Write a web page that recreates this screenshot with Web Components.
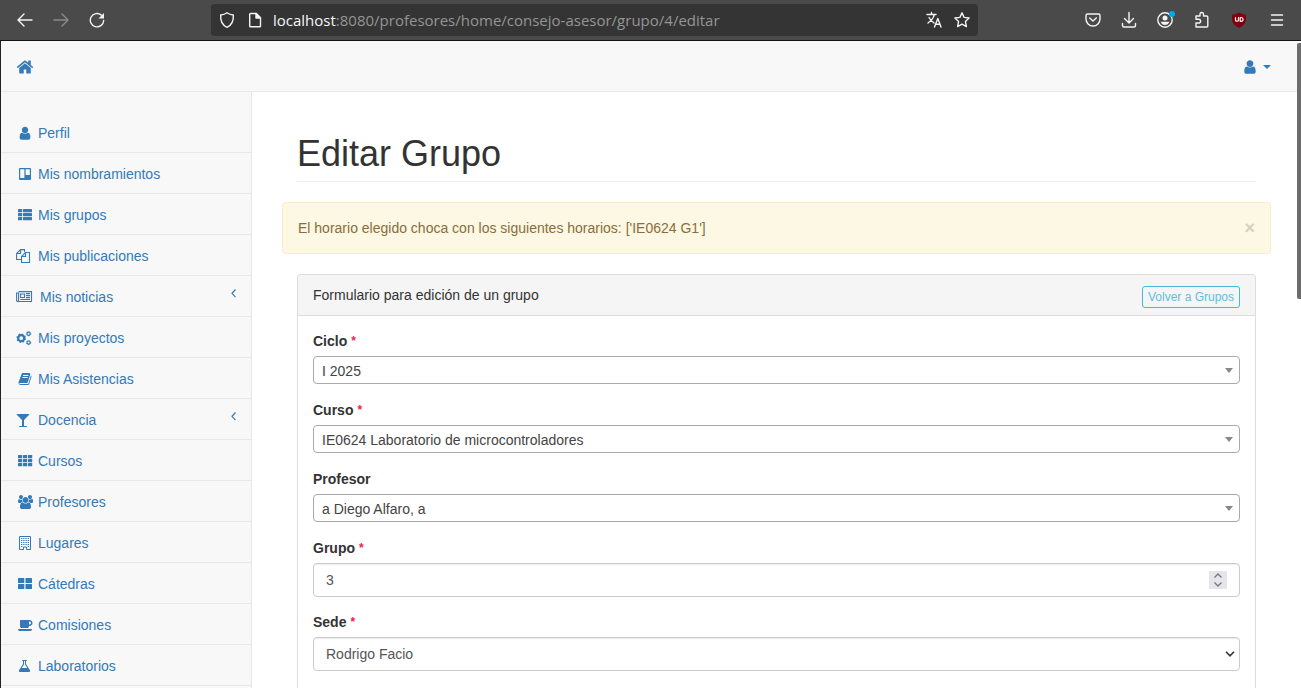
<!DOCTYPE html>
<html lang="es">
<head>
<meta charset="utf-8">
<title>Editar Grupo</title>
<style>
html, body { margin: 0; height: 100%; }
body { font: 14px/20px "Liberation Sans", Arial, sans-serif; color: #333; background: #fff; overflow: hidden; }
</style>
</head>
<body>
<app-window>
  <browser-bar slot="bar" host="localhost" path=":8080/profesores/home/consejo-asesor/grupo/4/editar"></browser-bar>
  <top-nav slot="top"></top-nav>
  <side-menu slot="side">
    <menu-item icon="user">Perfil</menu-item>
    <menu-item icon="trello">Mis nombramientos</menu-item>
    <menu-item icon="thlist">Mis grupos</menu-item>
    <menu-item icon="files">Mis publicaciones</menu-item>
    <menu-item icon="news" wide expandable>Mis noticias</menu-item>
    <menu-item icon="cogs">Mis proyectos</menu-item>
    <menu-item icon="book">Mis Asistencias</menu-item>
    <menu-item icon="glass" expandable>Docencia</menu-item>
    <menu-item icon="th">Cursos</menu-item>
    <menu-item icon="users">Profesores</menu-item>
    <menu-item icon="building">Lugares</menu-item>
    <menu-item icon="thlarge">Cátedras</menu-item>
    <menu-item icon="coffee">Comisiones</menu-item>
    <menu-item icon="flask">Laboratorios</menu-item>
  </side-menu>
  <page-title>Editar Grupo</page-title>
  <alert-box>El horario elegido choca con los siguientes horarios: ['IE0624 G1']</alert-box>
  <form-panel heading="Formulario para edición de un grupo" action="Volver a Grupos">
    <form-field kind="search" label="Ciclo" value="I 2025" required></form-field>
    <form-field kind="search" label="Curso" value="IE0624 Laboratorio de microcontroladores" required></form-field>
    <form-field kind="search" label="Profesor" value="a Diego Alfaro, a"></form-field>
    <form-field kind="number" label="Grupo" value="3" required></form-field>
    <form-field kind="select" label="Sede" value="Rodrigo Facio" required></form-field>
  </form-panel>
</app-window>

<script>
const base = `:host,*{box-sizing:border-box} button{font:inherit;color:inherit;background:none;border:0;padding:0;cursor:pointer} svg{display:block;flex:none}`;

function define(name, render) {
  customElements.define(name, class extends HTMLElement {
    connectedCallback() {
      if (this.shadowRoot) return;
      this.attachShadow({ mode: 'open' }).innerHTML = render(this);
    }
  });
}

const paths = {
  home: 'M1472 992v480q0 26-19 45t-45 19h-384v-384h-256v384h-384q-26 0-45-19t-19-45v-480q0-1 .5-3t.5-3l575-474 575 474q1 2 1 6zm223-69l-62 74q-8 9-21 11h-3q-13 0-21-7l-692-577-692 577q-12 8-24 7-13-2-21-11l-62-74q-8-10-7-23.5t11-21.5l719-599q32-26 76-26t76 26l244 204v-195q0-14 9-23t23-9h192q14 0 23 9t9 23v408l219 182q10 8 11 21.5t-7 23.5z',
  user: 'M1536 1399q0 109-62.5 187t-150.5 78h-854q-88 0-150.5-78t-62.5-187q0-85 8.5-160.5t31.5-152 58.5-131 94-89 134.5-34.5q131 128 313 128t313-128q76 0 134.5 34.5t94 89 58.5 131 31.5 152 8.5 160.5zm-256-887q0 159-112.5 271.5t-271.5 112.5-271.5-112.5-112.5-271.5 112.5-271.5 271.5-112.5 271.5 112.5 112.5 271.5z',
  users: 'M593 896q-162 5-265 128h-134q-82 0-138-40.5t-56-118.5q0-353 124-353 6 0 43.5 21t97.5 42.5 119 21.5q67 0 133-23-5 37-5 66 0 159 93 293zm1071 637q0 120-73 189.5t-194 69.5h-874q-121 0-194-69.5t-73-189.5q0-53 3.5-103.5t14-109 26.5-108.5 43-97.5 62-81 85.5-53.5 111.5-20q10 0 43 21.5t73 48 107 48 135 21.5 135-21.5 107-48 73-48 43-21.5q61 0 111.5 20t85.5 53.5 62 81 43 97.5 26.5 108.5 14 109 3.5 103.5zm-1024-1277q0 106-75 181t-181 75-181-75-75-181 75-181 181-75 181 75 75 181zm704 384q0 159-112.5 271.5t-271.5 112.5-271.5-112.5-112.5-271.5 112.5-271.5 271.5-112.5 271.5 112.5 112.5 271.5zm576 225q0 78-56 118.5t-138 40.5h-134q-103-123-265-128 93-134 93-293 0-29-5-66 66 23 133 23 59 0 119-21.5t97.5-42.5 43.5-21q124 0 124 353zm-128-609q0 106-75 181t-181 75-181-75-75-181 75-181 181-75 181 75 75 181z',
  coffee: 'M1664 640q0-80-56-136t-136-56h-64v384h64q80 0 136-56t56-136zm-1664 768h1792q0 106-75 181t-181 75h-1280q-106 0-181-75t-75-181zm1856-768q0 159-112.5 271.5t-271.5 112.5h-64v32q0 92-66 158t-158 66h-704q-92 0-158-66t-66-158v-736q0-26 19-45t45-19h1152q159 0 271.5 112.5t112.5 271.5z',
  glass: 'M1699 186q0 35-43 78l-632 632v768h320q26 0 45 19t19 45-19 45-45 19h-896q-26 0-45-19t-19-45 19-45 45-19h320v-768l-632-632q-43-43-43-78 0-23 18-36.5t38-17.5 43-4h1408q23 0 43 4t38 17.5 18 36.5z',
  flask: 'M1527 1448q56 89 21.5 152.5t-140.5 63.5h-1152q-106 0-140.5-63.5t21.5-152.5l503-793v-399h-64q-26 0-45-19t-19-45 19-45 45-19h512q26 0 45 19t19 45-19 45-45 19h-64v399zm-779-725l-272 429h712l-272-429-20-31v-436h-128v436z',
  book: 'M1703 478q40 57 18 129l-275 906q-19 64-76.5 107.5t-122.5 43.5h-923q-77 0-148.5-53.5t-99.5-131.5q-24-67-2-127 0-4 3-27t4-37q1-8-3-21.5t-3-19.5q2-11 8-21t16.5-23.5 16.5-23.5q23-38 45-91.5t30-91.5q3-10 .5-30t-.5-28q3-11 17-28t17-23q21-36 42-92t25-90q1-9-2.5-32t.5-28q4-13 22-30.5t22-22.5q19-26 42.5-84.5t27.5-96.5q1-8-3-25.5t-2-26.5q2-8 9-18t18-23 17-21q8-12 16.5-30.5t15-35 16-36 19.5-32 26.5-23.5 36-11.5 47.5 5.5l-1 3q38-9 51-9h761q74 0 114 56t18 130l-274 906q-36 119-71.5 153.5t-128.5 34.5h-869q-27 0-38 15-11 16-1 43 24 70 144 70h923q29 0 56-15.5t35-41.5l300-987q7-22 5-57 38 15 59 43zm-1064 2q-4 13 2 22.5t20 9.5h608q13 0 25.5-9.5t16.5-22.5l21-64q4-13-2-22.5t-20-9.5h-608q-13 0-25.5 9.5t-16.5 22.5zm-83 256q-4 13 2 22.5t20 9.5h608q13 0 25.5-9.5t16.5-22.5l21-64q4-13-2-22.5t-20-9.5h-608q-13 0-25.5 9.5t-16.5 22.5z'
};
const glyph = (name, x, y, s = 14) => `<path transform="translate(${x} ${y}) scale(${s / 1792})" d="${paths[name]}"/>`;
const cells = (xs, ys) => ys.map(([y, h]) => xs.map(([x, w]) => `<rect x="${x}" y="${y}" width="${w}" height="${h}" rx=".6"/>`).join('')).join('');
const gear = (x, y, r, n) => {
  const d = 2 * Math.PI * r * 1.35 / (2 * n);
  return `<g fill="none" stroke="currentColor"><circle cx="${x}" cy="${y}" r="${r}" stroke-width="${r * .75}"/><circle cx="${x}" cy="${y}" r="${r * 1.35}" stroke-width="${r * .5}" stroke-dasharray="${d}"/></g>`;
};

const icons = {
  user: glyph('user', 1.5, .7, 15),
  trello: '<path fill-rule="evenodd" d="M4 2h10a1 1 0 0 1 1 1v10a1 1 0 0 1-1 1H4a1 1 0 0 1-1-1V3a1 1 0 0 1 1-1zm.2 1.300v8.700h4.200V3.300zm5.400 0v5.700h4.200V3.300z"/>',
  thlist: cells([[2, 4.2], [7, 9]], [[2, 3.3], [6, 3.3], [10, 3.3]]),
  files: '<g fill="none" stroke="currentColor" stroke-width="1.1"><path d="M5 11.500H.6V5.500L4.600 1.600H8.500V4M4.600 1.600V5.500H.6"/><path d="M5.500 8.500L9.500 4.500H13.500V14.500H5.500zM9.500 4.500V8.500H5.500"/></g>',
  news: '<g fill="none" stroke="currentColor" stroke-width="1.1"><path d="M2.600 2.600H15.500V12.500H1.600Q.6 12.500.6 11.500V4H2.600V11.500Q2.600 12.500 1.600 12.500"/><path d="M4.600 5H8.500V8.500H4.600zM10 4.600H14M10 6.600H14M10 8.600H14M4.400 10.500H14"/></g>',
  cogs: gear(5.2, 8.2, 3, 8) + gear(12.6, 3.7, 1.6, 6) + gear(12.6, 12.6, 1.6, 6),
  book: glyph('book', 2, 1),
  glass: glyph('glass', 0, 1),
  th: cells([[2, 4.2], [7, 4.2], [12, 4.2]], [[2, 3.3], [6, 3.3], [10, 3.3]]),
  users: glyph('users', 2, 1),
  building: '<path fill="none" stroke="currentColor" d="M3.500 1.500h11v13h-4v-2.500h-3v2.500h-4z"/><path d="M5 3h1.300v1H5zm2.200 0h1.300v1H7.200zm2.300 0h1.300v1H9.500zm2.200 0H13v1h-1.300zM5 5h1.300v1H5zm2.200 0h1.300v1H7.200zm2.300 0h1.300v1H9.500zm2.200 0H13v1h-1.300zM5 7h1.300v1H5zm2.200 0h1.300v1H7.200zm2.300 0h1.300v1H9.500zm2.200 0H13v1h-1.300zM5 9h1.300v1H5zm2.200 0h1.300v1H7.200zm2.300 0h1.300v1H9.500zm2.200 0H13v1h-1.300zM5 11h1.300v1H5zm6.700 0H13v1h-1.300z"/>',
  thlarge: cells([[2, 6.3], [9.500, 6.500]], [[2, 5], [8, 5]]),
  coffee: glyph('coffee', 2, 1),
  flask: glyph('flask', 2, 1)
};

define('app-window', () => `<style>${base}
:host{display:flex;flex-direction:column;height:100vh;position:relative}
.page{flex:1;min-height:0;display:flex;flex-direction:column;border-left:1px solid #222;overflow:hidden}
.cols{flex:1;min-height:0;display:flex}
main{flex:1;min-width:0;padding:0 30px;border-left:1px solid #e7e7e7;display:flex;flex-direction:column}
.thumb{position:absolute;top:43px;right:0;width:4px;height:256px;background:#6c6c6c;border-radius:2px 0 0 2px}
</style><slot name="bar"></slot><div class="page"><slot name="top"></slot><div class="cols"><slot name="side"></slot><main><slot></slot></main></div></div><div class="thumb"></div>`);

define('browser-bar', el => {
  const b = (label, w, body, cls = '') => `<button type="button" class="${cls}" aria-label="${label}"><svg width="${w}" height="18" viewBox="0 0 ${w} 18" fill="none" stroke="currentColor" stroke-width="1.4" stroke-linecap="round" stroke-linejoin="round">${body}</svg></button>`;
  return `<style>${base}
:host{display:flex;align-items:center;flex:none;height:41px;padding:0 14px 1px 17px;background:#4a4a4a;box-shadow:inset 0 -1px #141414;color:#f4f4f4}
.group{display:flex;gap:20px;flex:none}
.off{color:#8b8b8b}
.url{flex:1;min-width:0;display:flex;align-items:center;height:32px;margin:0 107px 0 106px;padding:0 8px;gap:12px;border-radius:4px;background:#343434}
.address{flex:1;min-width:0;white-space:nowrap;overflow:hidden;font:15px/20px "Open Sans","Noto Sans",sans-serif;color:#949494}
.address b{font-weight:400;color:#f6f6f6}
.url .info{margin-right:-2px}
</style>
<nav class="group">${b('Atrás', 16, '<path d="M15 9H1M7 3L1 9l6 6"/>')}${b('Adelante', 16, '<path d="M1 9h14M9 3l6 6-6 6"/>', 'off')}${b('Recargar', 16, '<path d="M14.700 9.500a6.700 6.700 0 1 1-2.300-5.400"/><path fill="currentColor" stroke="none" d="M15 2v5.500H9.500z"/>')}</nav>
<div class="url">
${b('Protección', 16, '<path d="M8 1.700c2 1.500 4 2 6.300 2.300C14.800 10 12.500 14.200 8 16.300 3.500 14.200 1.200 10 1.700 4 4 3.700 6 3.200 8 1.700z"/>')}
${b('Información', 16, '<path d="M3.500 2.500h5.800L13.500 6.700v8.300q0 .8-.8.800H3.500q-.8 0-.8-.8V3.300q0-.8.800-.8z"/><path fill="currentColor" d="M9 2.500v4.500h4.500z"/>', 'info')}
<div class="address" role="textbox" aria-label="Dirección"><b>${el.getAttribute('host')}</b>${el.getAttribute('path')}</div>
${b('Traducir', 16, '<path d="M1 3.500h9M5.500 1.500v2M8.300 3.500Q7.500 8 2 12M3 6.500q2 3.500 5 5.500M8.500 16l3.300-8.500L15 16M9.600 13.300h4.300"/>')}
${b('Marcador', 16, '<path d="M8 1.800l2.100 4.600 5 .6-3.700 3.400 1 5.200L8 13.100l-4.400 2.500 1-5.200L.9 7l5-.6z"/>')}
</div>
<div class="group">
${b('Pocket', 16, '<path d="M2.500 3h11q1.500 0 1.500 1.500V8A7 7 0 0 1 1 8V4.500Q1 3 2.500 3z"/><path d="M4.700 7L8 10l3.300-3"/>')}
${b('Descargas', 16, '<path d="M8 1.500v10M3.500 7.500L8 12l4.500-4.500M1.500 12.500v2q0 1.500 1.500 1.500h10q1.500 0 1.500-1.500v-2"/>')}
${b('Cuenta', 18, '<circle cx="8" cy="9" r="7.200"/><circle cx="8" cy="7" r="2.500" fill="currentColor" stroke="none"/><path fill="currentColor" stroke="none" d="M3.700 10.800h8.600Q11 14 8 14t-4.300-3.200z"/><circle cx="15" cy="3" r="3" fill="#00a8f0" stroke="none"/>')}
${b('Extensiones', 16, '<path d="M1 16V12h2.300a1.900 1.900 0 1 0 0-3.700H1V5h4V3.300a1.700 1.700 0 0 1 3.500 0V5h3.200q1.100 0 1.100 1.100V15q0 1-1 1z"/>')}
${b('uBlock', 16, '<path fill="#800010" stroke="none" d="M8 1.500q3 2 7 2.200V8q0 5.500-7 9Q1 13.500 1 8V3.700q4-.2 7-2.200z"/><path stroke-width="1.200" d="M4.500 6.500v2.700q0 1 1.500 1t1.500-1V6.500M9.200 6.500h.8q2 0 2 1.900t-2 1.900h-.8z"/>')}
${b('Menú', 20, '<path d="M4.500 4h11M4.500 9h11M4.500 14h11"/>')}
</div>`;
});

define('top-nav', () => `<style>${base}
:host{display:flex;flex:none;align-items:center;justify-content:space-between;height:51px;padding:2px 30px 0 15px;background:#f8f8f8;border-bottom:1px solid #e7e7e7;color:#337ab7}
a{color:inherit}
button{display:flex;align-items:center;gap:6px}
</style><a href="#inicio" aria-label="Inicio"><svg width="18" height="18" viewBox="0 0 18 18" fill="currentColor">${glyph('home', 0, 0, 18)}</svg></a>
<button type="button" aria-label="Usuario"><svg width="14" height="14" viewBox="0 0 14 14" fill="currentColor"><g transform="translate(-1 -1) scale(1.140)">${glyph('user', 0, 0)}</g></svg><svg width="8" height="4" viewBox="0 0 8 4" fill="currentColor"><path d="M0 0h8L4 4z"/></svg></button>`);

define('side-menu', () => `<style>${base}
:host{display:block;flex:none;width:250px;padding-top:20px;background:#f8f8f8}
</style><nav><slot></slot></nav>`);

define('menu-item', el => `<style>${base}
:host{display:block;border-bottom:1px solid #e7e7e7}
a{display:flex;align-items:center;gap:4px;padding:11px 15px 9px;color:#337ab7;text-decoration:none}
:host([wide]) a{gap:6px}
span{flex:1}
.angle{align-self:flex-start}
</style><a href="#"><svg width="18" height="16" viewBox="0 0 18 16" fill="currentColor">${icons[el.getAttribute('icon')]}</svg><span><slot></slot></span>${el.hasAttribute('expandable') ? '<svg class="angle" width="5" height="14" viewBox="0 0 5 14" fill="none" stroke="currentColor" stroke-width="1.200"><path d="M4.500 2.500L1 6.300l3.500 3.800"/></svg>' : ''}</a>`);

define('page-title', () => `<style>${base}
:host{display:block;flex:none;margin:42px 15px 20px;padding-bottom:7px;border-bottom:1px solid #eee}
h1{margin:0;font-size:36px;line-height:40px;font-weight:400}
</style><h1><slot></slot></h1>`);

define('alert-box', () => `<style>${base}
:host{display:flex;flex:none;justify-content:space-between;align-items:center;margin-bottom:20px;padding:15px;border:1px solid #faebcc;border-radius:4px;background:#fcf8e3;color:#8a6d3b}
button{font-size:18px;line-height:20px;font-weight:700;color:#d6d1bc}
</style><span><slot></slot></span><button type="button" aria-label="Cerrar">×</button>`);

define('form-panel', el => `<style>${base}
:host{display:flex;flex-direction:column;flex:1 0 auto;margin:0 15px;border:1px solid #ddd;border-bottom:0;border-radius:4px 4px 0 0}
header{display:flex;justify-content:space-between;align-items:flex-start;height:41px;padding:10px 15px 7px;background:#f5f5f5;border-bottom:1px solid #ddd;border-radius:3px 3px 0 0}
button{align-self:flex-end;height:22px;padding:0 5px;border:1px solid #46b8da;border-radius:3px;font-size:12px;line-height:20px;color:#5bc0de}
form{padding:15px}
</style><header><span>${el.getAttribute('heading')}</span><button type="button">${el.getAttribute('action')}</button></header><form><slot></slot></form>`);

define('form-field', el => {
  const kind = el.getAttribute('kind'), value = el.getAttribute('value');
  const mark = {
    search: '<svg class="mark" width="8" height="5" viewBox="0 0 8 5"><path fill="#888" d="M0 0h8L4 5z"/></svg>',
    select: '<svg class="mark" width="10" height="6" viewBox="0 0 10 6"><path fill="none" stroke="#333" stroke-width="1.600" d="M1 .8l4 4 4-4"/></svg>',
    number: '<svg class="mark" width="18" height="18" viewBox="0 0 18 18"><path fill="#e6e5ec" d="M0 0h18v18H0z"/><path fill="none" stroke="#77767e" stroke-width="1.300" d="M5.500 6.500L9 3l3.500 3.500M5.500 11.500L9 15l3.500-3.500"/></svg>'
  }[kind];
  const control = kind === 'number'
    ? `<input id="c" type="number" value="${value}">`
    : `<select id="c"><option>${value}</option></select>`;
  return `<style>${base}
:host{display:block;margin-bottom:15px}
:host([kind=search]){margin-bottom:16px}
label{display:flex;gap:4px;margin-bottom:5px;font-weight:700}
i{font-size:12px;font-style:normal;color:#ee1c4e}
.box{display:grid;align-items:center}
.box>*{grid-area:1/1}
select,input{appearance:none;width:100%;height:34px;margin:0;padding:0 12px;font:inherit;color:#555;background:#fff;border:1px solid #ccc;border-radius:4px;outline:0;box-shadow:inset 0 1px 1px rgba(0,0,0,.08)}
input{appearance:textfield}
input::-webkit-inner-spin-button{display:none}
.search select{height:28px;padding:2px 8px 0;color:#444;border-color:#aaa;box-shadow:none}
.mark{justify-self:end;pointer-events:none;margin-right:5px}
.search .mark{margin-right:7px}
.number .mark{margin-right:13px}
</style><label for="c">${el.getAttribute('label')}${el.hasAttribute('required') ? ' <i>*</i>' : ''}</label><div class="box ${kind}">${control}${mark}</div>`;
});
</script>
</body>
</html>
